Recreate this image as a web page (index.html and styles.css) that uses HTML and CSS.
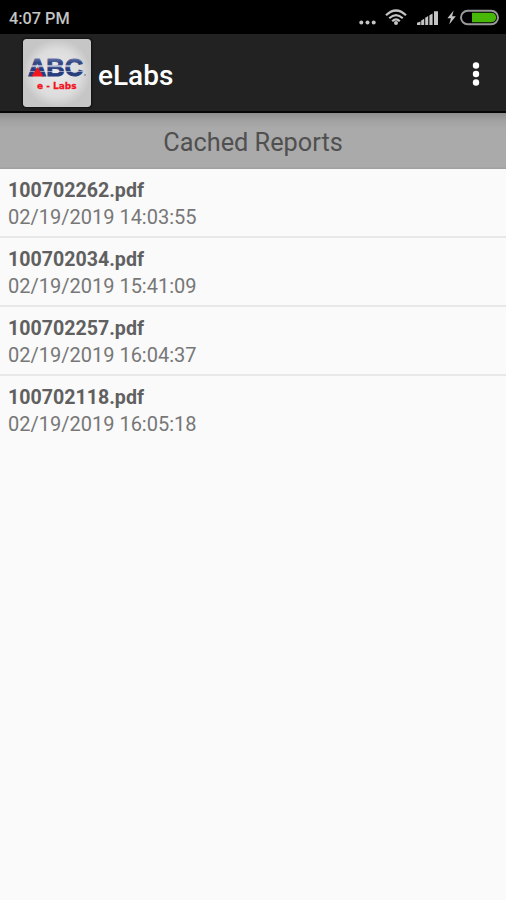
FILE: index.html
```html
<!DOCTYPE html>
<html lang="en">
<head>
<meta charset="utf-8">
<title>eLabs</title>
<link rel="stylesheet" href="styles.css">
</head>
<body>
<div class="status">
  <span class="time">4:07 PM</span>
  <svg class="status-icons" width="147" height="34" viewBox="359 0 147 34" aria-hidden="true">
    <g fill="#c4c4c4">
      <circle cx="361.3" cy="22.6" r="2"/><circle cx="367.5" cy="22.6" r="2"/><circle cx="373.7" cy="22.6" r="2"/>
      <circle cx="396" cy="23" r="2"/>
      <path d="M417 25v-2.2l3.5-1.2V25zM421.2 25v-4.6l3-1.6V25zM425.2 25v-7.2l3-1.8v9zM429.4 25v-9.7l3.2-1.8V25zM434 25V11.2h4V25z"/>
      <path d="M453.6 10.5l-6.2 7.7h3.5l-1.7 6.3 6.6-8.3h-3.7z"/>
    </g>
    <g fill="none" stroke="#c4c4c4" stroke-width="2.2">
      <path d="M386 15.3q10-9.6 20 0M389.2 18.3q6.8-6.4 13.6 0M392.2 21.2q3.8-3.8 7.6 0"/>
    </g>
    <rect x="461" y="10.8" width="37" height="13.4" rx="6.7" fill="#000" stroke="#999" stroke-width="2"/>
    <path d="M472 12.8h19.5a4.7 4.7 0 0 1 0 9.4H472z" fill="#48b808"/>
  </svg>
</div>
<header class="bar">
  <svg class="logo" width="68" height="68" viewBox="0 0 68 68">
    <defs>
      <radialGradient id="plate"><stop offset="0" stop-color="#ebebeb"/><stop offset=".7" stop-color="#dcdcdc"/><stop offset="1" stop-color="#c6c6c6"/></radialGradient>
      <linearGradient id="stripes" x1="0" y1="19" x2="0" y2="37" gradientUnits="userSpaceOnUse">
        <stop offset="0" stop-color="#6b78ad"/><stop offset=".25" stop-color="#334783"/><stop offset=".36" stop-color="#334783"/><stop offset=".4" stop-color="#a4abc9"/><stop offset=".48" stop-color="#a4abc9"/><stop offset=".54" stop-color="#263c7c"/><stop offset=".7" stop-color="#263c7c"/><stop offset=".74" stop-color="#a5acc9"/><stop offset=".8" stop-color="#263c7c"/><stop offset="1" stop-color="#263c7c"/>
      </linearGradient>
    </defs>
    <rect width="68" height="68" rx="3" fill="url(#plate)"/>
    <text class="abc" x="5" y="37" textLength="55" lengthAdjust="spacingAndGlyphs" fill="url(#stripes)" stroke="url(#stripes)" stroke-width=".9">ABC</text>
    <path d="M14.5 28l6 9.4h-12z" fill="#f2151d"/>
    <circle cx="62" cy="36" r="1" fill="#8992b5"/>
    <text class="labs" x="14" y="49.5" textLength="39.5" lengthAdjust="spacingAndGlyphs">e - Labs</text>
  </svg>
  <h1 class="name">eLabs</h1>
  <svg class="more" width="12" height="28" viewBox="0 0 12 28" fill="#fff" aria-hidden="true"><circle cx="6" cy="5.5" r="3.2"/><circle cx="6" cy="14" r="3.2"/><circle cx="6" cy="22.5" r="3.2"/></svg>
</header>
<h2 class="heading">Cached Reports</h2>
<ul class="reports">
  <li><b>100702262.pdf</b><span>02/19/2019 14:03:55</span></li>
  <li><b>100702034.pdf</b><span>02/19/2019 15:41:09</span></li>
  <li><b>100702257.pdf</b><span>02/19/2019 16:04:37</span></li>
  <li><b>100702118.pdf</b><span>02/19/2019 16:05:18</span></li>
</ul>
</body>
</html>
```
FILE: styles.css
```css
* { box-sizing: border-box; }
body {
  margin: 0;
  min-height: 900px;
  background: #fafafa;
  font-family: Roboto, "Liberation Sans", sans-serif;
}
.status {
  display: flex;
  justify-content: space-between;
  height: 34px;
  background: #000;
}
.time {
  padding-left: 9px;
  color: #c4c4c4;
  font-size: 16.3px;
  font-weight: 500;
  line-height: 37px;
}
.bar {
  display: flex;
  align-items: center;
  height: 79px;
  padding: 0 24px 0 23px;
  background: #222;
  border-bottom: 2px solid #050505;
}
.logo { margin-top: 1px; border-radius: 3px; box-shadow: 0 0 2px 1px #111; }
.abc { font: bold 24px "Liberation Sans", sans-serif; }
.labs { font: bold 9.5px "DejaVu Sans", sans-serif; fill: #f2151d; stroke: #f2151d; stroke-width: .3; }
.name {
  margin: 7px auto 0 7px;
  color: #fff;
  font-size: 28px;
  font-weight: 500;
  line-height: 32px;
}
.more { margin-top: 2px; }
.heading {
  height: 56px;
  margin: 0;
  background: linear-gradient(#8d8d8d, #a2a2a2 8px, #aaa 16px, #aaa 54px, #a0a0a0 55px);
  color: #505050;
  font-size: 25.3px;
  font-weight: 400;
  line-height: 60px;
  text-align: center;
}
.reports {
  margin: 0;
  padding: 0;
  list-style: none;
}
.reports li {
  display: flex;
  flex-direction: column;
  height: 69px;
  padding: 8px 8px 0;
  border-bottom: 2px solid #e8e8e8;
}
.reports li:last-child { border-bottom: 0; }
.reports b {
  color: #606060;
  font-size: 19.6px;
  line-height: 27px;
}
.reports span {
  color: #777;
  font-size: 20px;
  line-height: 27px;
}
```
